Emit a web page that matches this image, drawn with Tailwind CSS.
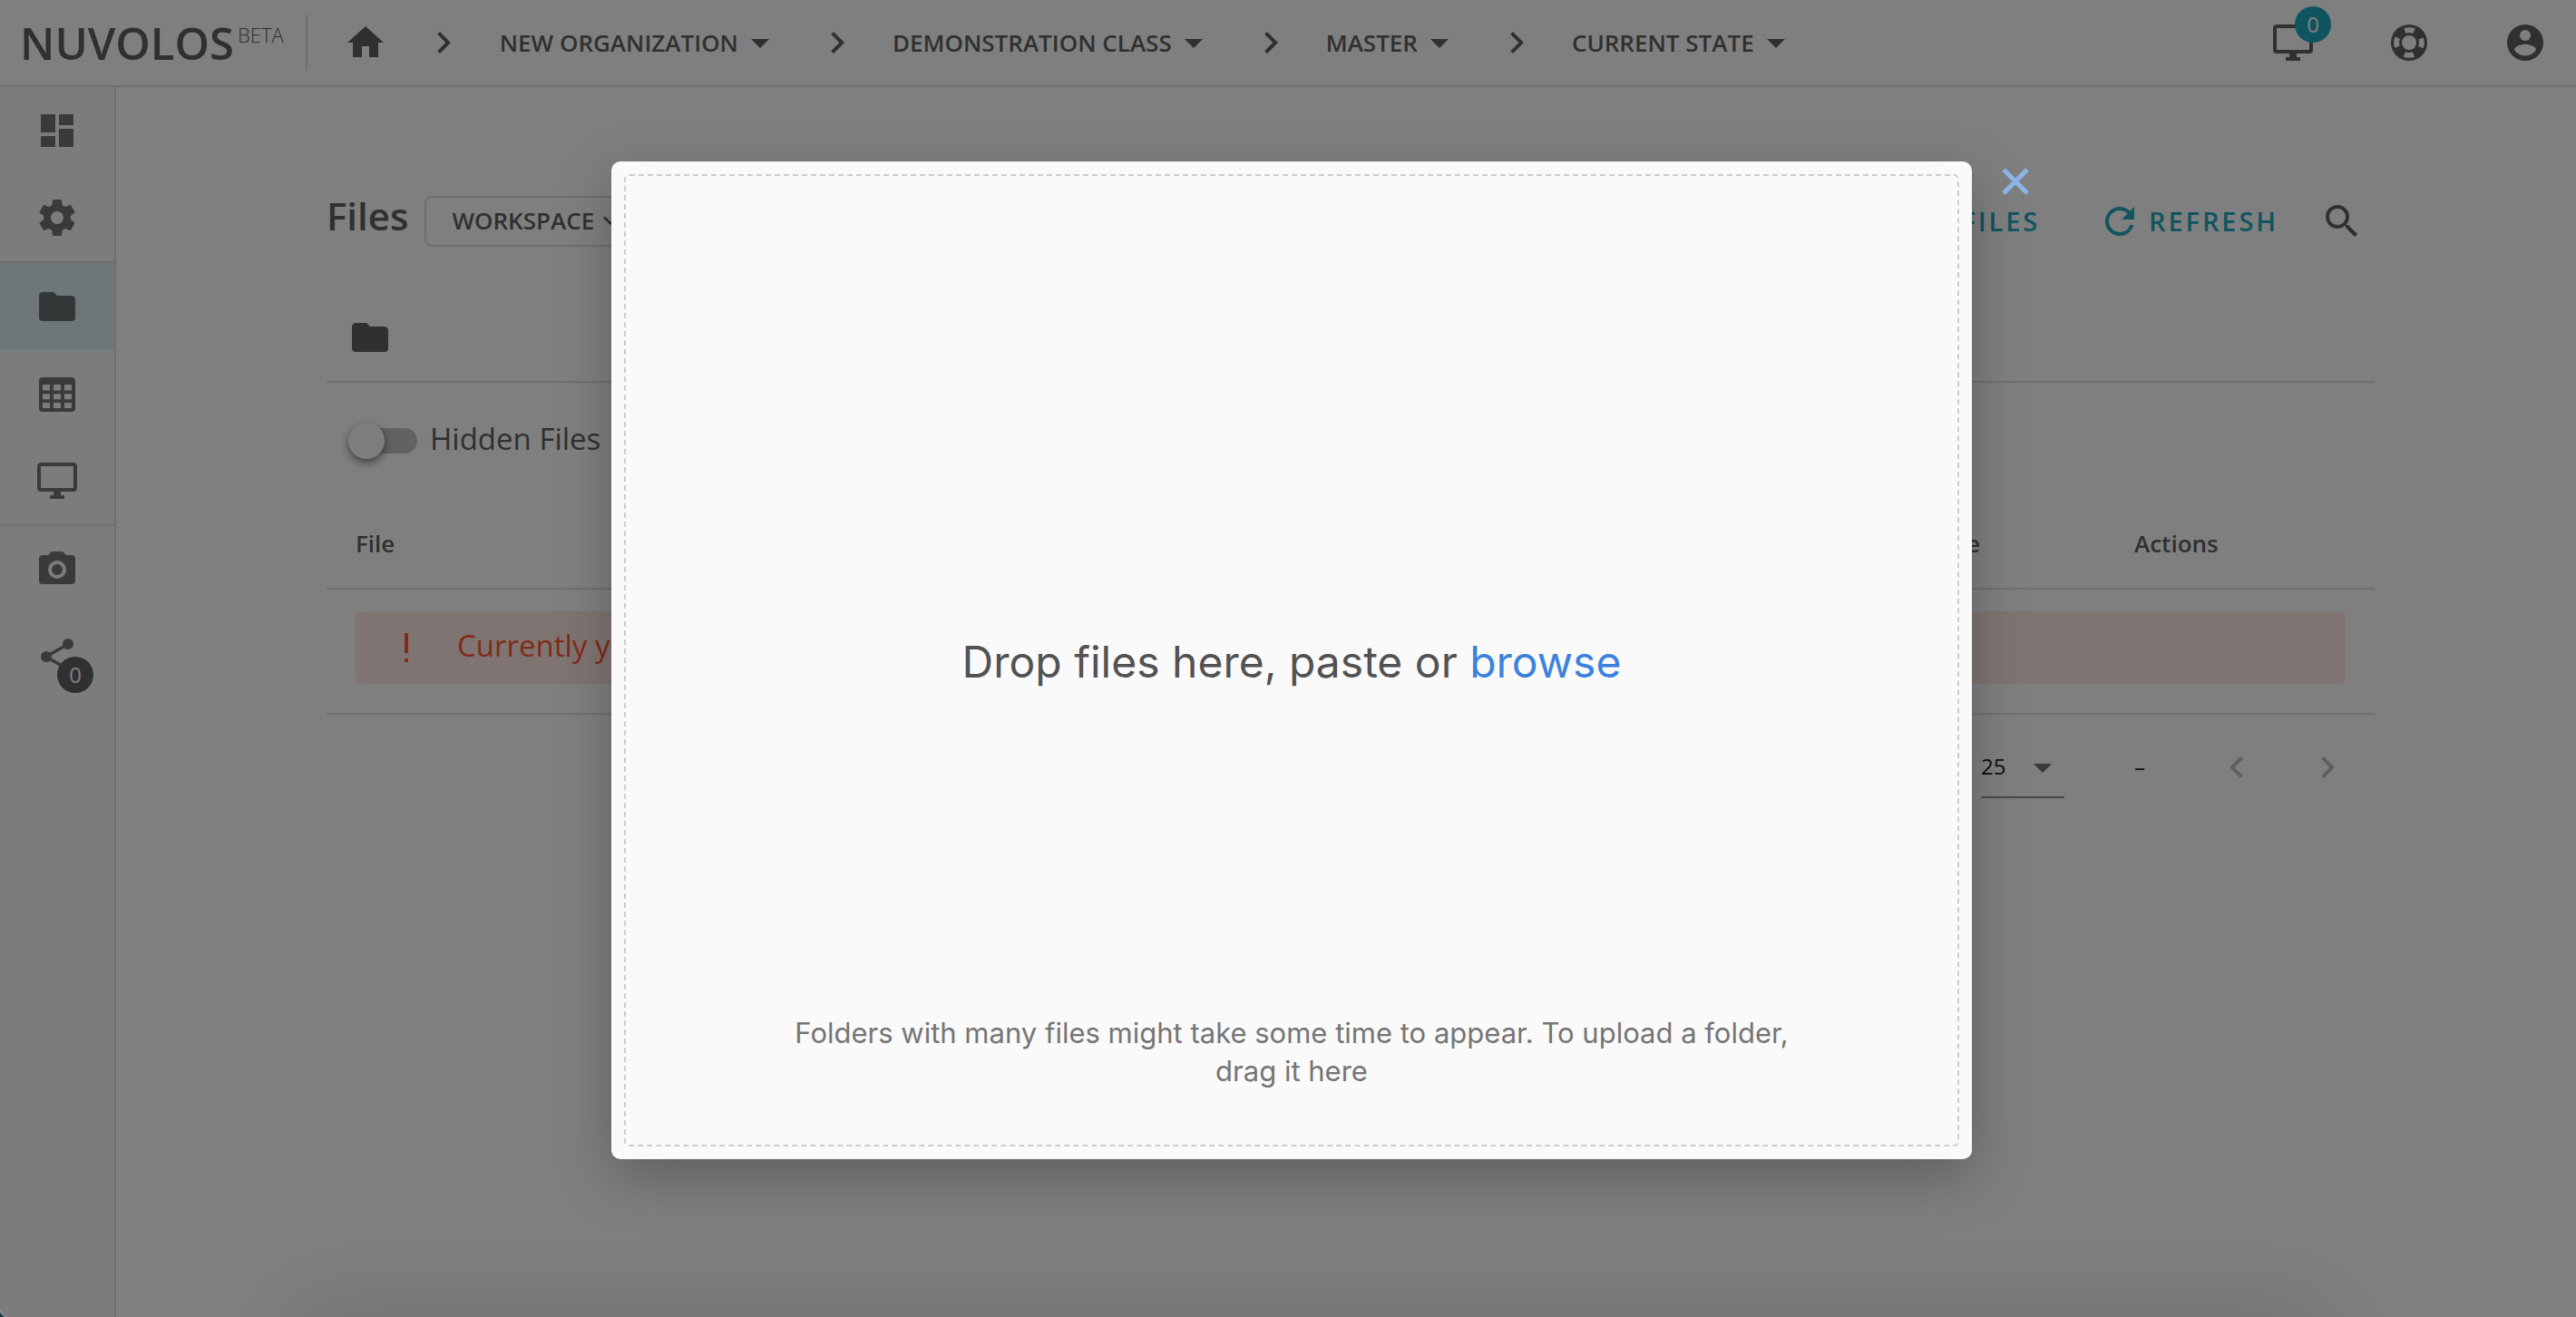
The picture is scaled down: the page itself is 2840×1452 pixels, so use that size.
<!DOCTYPE html>
<html lang="en">
<head>
<meta charset="utf-8">
<title>Nuvolos - Files</title>
<script src="https://cdn.jsdelivr.net/npm/@tailwindcss/browser@4"></script>
</head>
<body class="bg-[#12303f]">
<svg class="hidden">
  <symbol id="chevron-right" viewBox="0 0 24 24"><path d="M8.59 16.58 13.17 12 8.59 7.41 10 6l6 6-6 6-1.41-1.42z"/></symbol>
  <symbol id="chevron-left" viewBox="0 0 24 24"><path d="M15.41 16.58 10.83 12l4.58-4.59L14 6l-6 6 6 6 1.41-1.42z"/></symbol>
  <symbol id="chevron-down" viewBox="0 0 24 24"><path d="M7.41 8.58 12 13.17l4.59-4.59L18 10l-6 6-6-6 1.41-1.42z"/></symbol>
  <symbol id="menu-down" viewBox="0 0 24 24"><path d="m7 10 5 5 5-5H7z"/></symbol>
  <symbol id="folder" viewBox="0 0 24 24"><path d="M10 4H4c-1.11 0-2 .89-2 2v12a2 2 0 0 0 2 2h16a2 2 0 0 0 2-2V8c0-1.11-.9-2-2-2h-8l-2-2z"/></symbol>
  <symbol id="monitor" viewBox="0 0 24 24"><path d="M21 16H3V4h18m0-2H3c-1.11 0-2 .89-2 2v12a2 2 0 0 0 2 2h7v2H8v2h8v-2h-2v-2h7a2 2 0 0 0 2-2V4c0-1.11-.9-2-2-2z"/></symbol>
</svg>

<div class="relative flex min-h-screen flex-col overflow-hidden rounded-bl-lg bg-white font-['Open_Sans',sans-serif] text-[#606060]">
  <header class="flex h-24 items-center border-b-2 border-[#dedede] pr-8 pl-[22px]">
    <a href="#" class="flex items-start gap-1 leading-none">
      <span class="text-[49px] leading-none font-semibold">NUVOLOS</span>
      <span class="pt-1 text-[22px] leading-none font-light">BETA</span>
    </a>
    <div class="ml-6 h-[62px] w-0.5 bg-[#dedede]"></div>
    <nav class="ml-10 flex items-center text-[26px] font-semibold" aria-label="Breadcrumb">
      <a href="#" aria-label="Home"><svg class="size-12" fill="currentColor" viewBox="0 0 24 24"><path d="M10 20v-6h4v6h5v-8h3L12 3 2 12h3v8h5z"/></svg></a>
      <svg class="mx-[38px] size-12" fill="currentColor"><use href="#chevron-right"/></svg>
      <button class="flex items-center">NEW ORGANIZATION<svg class="size-12" fill="currentColor"><use href="#menu-down"/></svg></button>
      <svg class="mx-[37px] size-12" fill="currentColor"><use href="#chevron-right"/></svg>
      <button class="flex items-center">DEMONSTRATION CLASS<svg class="size-12" fill="currentColor"><use href="#menu-down"/></svg></button>
      <svg class="mx-[37px] size-12" fill="currentColor"><use href="#chevron-right"/></svg>
      <button class="flex items-center">MASTER<svg class="size-12" fill="currentColor"><use href="#menu-down"/></svg></button>
      <svg class="mx-[37px] size-12" fill="currentColor"><use href="#chevron-right"/></svg>
      <button class="flex items-center">CURRENT STATE<svg class="size-12" fill="currentColor"><use href="#menu-down"/></svg></button>
    </nav>
    <div class="ml-auto flex items-center gap-20">
      <button class="relative" aria-label="Running applications">
        <svg class="size-12" fill="currentColor"><use href="#monitor"/></svg>
        <span class="absolute -top-4 left-[26px] flex size-10 items-center justify-center rounded-full bg-[#20a9c0] text-2xl text-white">0</span>
      </button>
      <button aria-label="Help"><svg class="size-12" viewBox="0 0 24 24"><circle cx="12" cy="12" r="10" fill="currentColor"/><circle cx="12" cy="12" r="4" fill="white"/><g fill="none" stroke="white" stroke-width="2.9"><circle cx="12" cy="12" r="6.95" stroke-dasharray="5.2 5.717" stroke-dashoffset="2.6"/></g></svg></button>
      <button aria-label="Account"><svg class="size-12" viewBox="0 0 24 24"><circle cx="12" cy="12" r="10" fill="currentColor"/><circle cx="12" cy="8" r="3" fill="white"/><path fill="white" d="M12 19.2c-2.500 0-4.710-1.280-6-3.200.030-2 4-3.100 6-3.100s5.970 1.100 6 3.100c-1.290 1.920-3.500 3.200-6 3.200z"/></svg></button>
    </div>
  </header>

  <div class="flex flex-1">
    <aside class="flex w-32 shrink-0 flex-col border-r-2 border-[#dedede] bg-[#f7f9fc] text-[#727472]">
      <a href="#" aria-label="Dashboard" class="flex h-24 items-center justify-center"><svg class="size-12" fill="currentColor" viewBox="0 0 24 24"><path d="M13 3v6h8V3m-8 18h8V11h-8M3 21h8v-6H3m0-2h8V3H3v10z"/></svg></a>
      <a href="#" aria-label="Settings" class="flex h-24 items-center justify-center"><svg class="size-12" fill="currentColor" viewBox="0 0 24 24"><path d="M12 15.500A3.500 3.500 0 0 1 8.500 12 3.500 3.500 0 0 1 12 8.500a3.500 3.500 0 0 1 3.500 3.500 3.500 3.500 0 0 1-3.500 3.500m7.430-2.530c.040-.320.070-.640.070-.970 0-.330-.030-.660-.070-1l2.110-1.630c.190-.150.240-.420.120-.640l-2-3.460c-.120-.220-.390-.310-.610-.220l-2.490 1c-.520-.390-1.060-.730-1.690-.980l-.370-2.650A.506.506 0 0 0 14 2h-4c-.250 0-.460.180-.500.420l-.370 2.650c-.630.250-1.170.590-1.690.980l-2.490-1c-.220-.090-.490 0-.610.220l-2 3.460c-.130.220-.070.490.120.640L4.570 11c-.040.340-.070.670-.070 1 0 .330.030.650.070.970l-2.110 1.660c-.190.150-.250.420-.120.640l2 3.460c.120.220.390.300.610.220l2.490-1.010c.520.400 1.060.740 1.690.990l.370 2.650c.040.240.250.420.500.420h4c.250 0 .460-.180.500-.420l.370-2.650c.630-.260 1.170-.590 1.690-.990l2.490 1.010c.220.080.490 0 .610-.220l2-3.460c.120-.220.070-.490-.120-.640l-2.110-1.660z"/></svg></a>
      <div class="border-y-2 border-[#dedede]">
        <a href="#" aria-label="Files" class="flex h-24 items-center justify-center bg-[#dbeff4] text-[#666e70]"><svg class="size-12" fill="currentColor"><use href="#folder"/></svg></a>
        <a href="#" aria-label="Tables" class="flex h-24 items-center justify-center"><svg class="size-12" fill="currentColor" fill-rule="evenodd" viewBox="0 0 24 24"><path d="M4 3h16a2 2 0 0 1 2 2v15a2 2 0 0 1-2 2H4a2 2 0 0 1-2-2V5a2 2 0 0 1 2-2M4 7v3.200h4V7H4m6 0v3.200h4V7h-4m6 0v3.200h4V7h-4M4 12.100v3h4v-3H4m6 0v3h4v-3h-4m6 0v3h4v-3h-4M4 17v3h4v-3H4m6 0v3h4v-3h-4m6 0v3h4v-3h-4z"/></svg></a>
        <a href="#" aria-label="Applications" class="flex h-24 items-center justify-center"><svg class="size-12" fill="currentColor"><use href="#monitor"/></svg></a>
      </div>
      <a href="#" aria-label="Snapshots" class="flex h-24 items-center justify-center"><svg class="size-12" fill="currentColor" viewBox="0 0 24 24"><path d="M4 4h3l2-2h6l2 2h3a2 2 0 0 1 2 2v12a2 2 0 0 1-2 2H4a2 2 0 0 1-2-2V6a2 2 0 0 1 2-2m8 3a5 5 0 0 0-5 5 5 5 0 0 0 5 5 5 5 0 0 0 5-5 5 5 0 0 0-5-5m0 2a3 3 0 0 1 3 3 3 3 0 0 1-3 3 3 3 0 0 1-3-3 3 3 0 0 1 3-3z"/></svg></a>
      <a href="#" aria-label="Shared" class="flex h-24 items-center justify-center">
        <span class="relative">
          <svg class="size-12" fill="currentColor" viewBox="0 0 24 24"><path d="M18 16.080c-.760 0-1.440.300-1.960.770L8.910 12.700c.050-.230.090-.460.090-.700s-.040-.470-.090-.700l7.050-4.110c.540.500 1.250.810 2.040.810a3 3 0 1 0-3-3c0 .240.040.470.090.700L8.040 9.810A3 3 0 1 0 6 15c.790 0 1.500-.310 2.040-.810l7.120 4.150c-.050.210-.080.430-.080.660 0 1.610 1.310 2.910 2.920 2.910s2.920-1.300 2.920-2.910A2.920 2.920 0 0 0 18 16.080z"/></svg>
          <span class="absolute top-6 left-6 flex size-10 items-center justify-center rounded-full bg-[#606060] text-2xl text-white">0</span>
        </span>
      </a>
    </aside>

    <main class="flex-1 pt-28 pr-[222px] pl-[232px]">
      <div class="flex h-[72px] items-center pr-3">
        <h1 class="pb-3 text-[42px] leading-none font-semibold">Files</h1>
        <button class="ml-[18px] flex h-14 items-center rounded-lg border-2 border-[#dedede] pr-2 pb-0.5 pl-7 text-[26px] font-semibold">WORKSPACE<svg class="ml-0.5 size-8" fill="currentColor"><use href="#chevron-down"/></svg></button>
        <div class="ml-auto flex items-center text-[29px] font-semibold tracking-widest text-[#20a9c0]">
          <button>ADD FILES</button>
          <button class="ml-16 flex items-center gap-2"><svg class="size-12" fill="currentColor" viewBox="0 0 24 24"><path d="M17.650 6.350A7.958 7.958 0 0 0 12 4a8 8 0 1 0 7.730 10h-2.080A5.990 5.990 0 0 1 12 18a6 6 0 1 1 0-12c1.660 0 3.140.690 4.220 1.780L13 11h7V4l-2.350 2.350z"/></svg>REFRESH</button>
        </div>
        <button aria-label="Search" class="ml-[46px]"><svg class="size-12" fill="currentColor" viewBox="0 0 24 24"><path d="M9.500 3A6.500 6.500 0 0 1 16 9.500c0 1.610-.590 3.090-1.560 4.230l.270.270h.790l5 5-1.500 1.500-5-5v-.790l-.270-.270A6.516 6.516 0 0 1 9.500 16a6.500 6.500 0 0 1 0-13m0 2C7 5 5 7 5 9.500S7 14 9.500 14 14 12 14 9.500 12 5 9.500 5z"/></svg></button>
      </div>

      <div class="flex h-[142px] items-end border-b-2 border-[#dedede] pb-6 pl-6">
        <a href="#" aria-label="Root folder"><svg class="size-12" fill="currentColor"><use href="#folder"/></svg></a>
      </div>

      <label class="flex h-32 items-center pl-6 text-[33px]">
        <input type="checkbox" class="peer sr-only">
        <span class="relative ml-1 h-7 w-[72px] rounded-full bg-[#c4c4c4]">
          <span class="absolute -top-1.5 -left-1 size-10 rounded-full bg-[#fafafa] shadow-[0_4px_10px_rgba(0,0,0,0.5)]"></span>
        </span>
        <span class="ml-3.5 pb-1">Hidden Files</span>
      </label>

      <table class="w-full table-fixed border-separate border-spacing-0">
        <thead>
          <tr class="h-[100px] text-left text-[26px]">
            <th class="border-b-2 border-[#dedede] pl-8 font-semibold">File</th>
            <th class="w-[215px] border-b-2 border-[#dedede] pl-7 font-semibold">Size</th>
            <th class="w-[297px] border-b-2 border-[#dedede] pl-8 font-semibold">Actions</th>
          </tr>
        </thead>
        <tbody>
          <tr>
            <td colspan="3" class="border-b-2 border-[#dedede] px-8 pt-6 pb-8">
              <div class="flex h-20 items-center rounded-lg bg-[#ffe8e3] pl-8 text-[33px] text-[#ff5733]">
                <svg class="mr-8 size-12" fill="currentColor" viewBox="0 0 24 24"><path d="M11 4h2v11h-2V4m2 16h-2v-2h2v2z"/></svg>
                <span class="pb-1">Currently you have no files.</span>
              </div>
            </td>
          </tr>
        </tbody>
      </table>

      <div class="flex h-[116px] items-center justify-end gap-[77px] pr-7 text-2xl text-[#212121]">
        <div class="relative">
          <select aria-label="Rows per page" class="h-[68px] w-[92px] appearance-none border-b-2 border-[#929292]"><option>25</option></select>
          <svg class="pointer-events-none absolute top-2.5 right-0 size-12" fill="#757575"><use href="#menu-down"/></svg>
        </div>
        <span>–</span>
        <div class="flex gap-[52px] text-[#bfbfbf]">
          <button aria-label="Previous page"><svg class="size-12" fill="currentColor"><use href="#chevron-left"/></svg></button>
          <button aria-label="Next page"><svg class="size-12" fill="currentColor"><use href="#chevron-right"/></svg></button>
        </div>
      </div>
    </main>
  </div>

  <!-- snackbar parked below the window; only its shadow shows -->
  <div class="absolute top-full right-[280px] left-[330px] h-20 shadow-[0_0_100px_rgba(0,0,0,0.16)]"></div>

  <!-- upload dialog -->
  <div class="absolute inset-0 flex items-center justify-center bg-black/50 pt-1 pl-2 font-[Inter,sans-serif]">
    <div role="dialog" aria-label="Upload files" class="relative flex h-[1100px] w-[1500px] rounded-[10px] bg-[#fafafa] p-3.5 shadow-[0_20px_60px_rgba(0,0,0,0.25)]">
      <div class="relative flex flex-1 flex-col items-center justify-center rounded-md border-2 border-dashed border-[#cdcdcd] pt-1 text-center">
        <p class="text-5xl leading-[60px] text-[#525252]">Drop files here, paste or <button class="text-[#3b82df]">browse</button></p>
        <p class="absolute inset-x-0 bottom-[60px] mx-auto w-[1120px] text-[31px] leading-[42px] text-[#757575]">Folders with many files might take some time to appear. To upload a folder, drag it here</p>
      </div>
      <button aria-label="Close" class="absolute top-1.5 -right-16 text-[#8ab4ea]"><svg class="size-8" viewBox="0 0 32 32" fill="none" stroke="currentColor" stroke-width="5"><path d="M3 3 29 29M29 3 3 29"/></svg></button>
    </div>
  </div>
</div>
</body>
</html>
